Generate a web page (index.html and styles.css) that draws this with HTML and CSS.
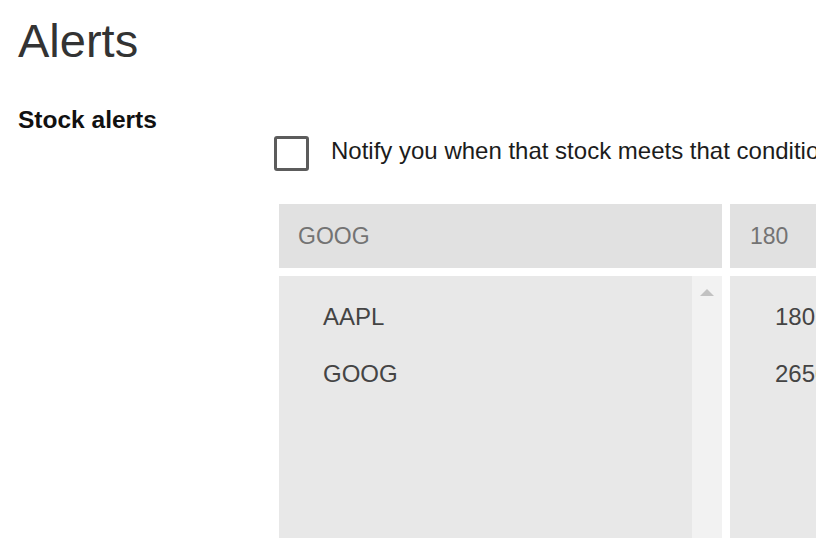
FILE: index.html
```html
<!DOCTYPE html>
<html lang="en">
<head>
<meta charset="utf-8">
<title>Alerts</title>
<link rel="stylesheet" href="styles.css">
</head>
<body>
<main class="page">
  <h1 class="title">Alerts</h1>
  <h2 class="section-title">Stock alerts</h2>
  <div class="section">
    <label class="check-row">
      <span class="checkbox"></span>
      <span class="check-label">Notify you when that stock meets that condition</span>
    </label>
    <div class="fields">
      <div class="field">GOOG</div>
      <div class="field field-right">180</div>
      <div class="list">
        <ul class="list-items">
          <li>AAPL</li>
          <li>GOOG</li>
        </ul>
        <div class="scrollbar"><span class="arrow-up"></span></div>
      </div>
      <div class="list list-right">
        <ul class="list-items">
          <li>180</li>
          <li>2650</li>
        </ul>
      </div>
    </div>
  </div>
</main>
</body>
</html>
```
FILE: styles.css
```css
html, body {
  margin: 0;
  padding: 0;
  width: 816px;
  height: 538px;
  overflow: hidden;
  background: #ffffff;
}

body {
  font-family: "Liberation Sans", Arial, sans-serif;
}

.page {
  padding: 13px 0 0 18px;
}

.title {
  margin: 0;
  font-size: 47px;
  line-height: 56px;
  font-weight: 400;
  color: #333333;
}

.section-title {
  margin: 37px 0 0 0;
  font-size: 24.5px;
  line-height: 28px;
  font-weight: 700;
  color: #111111;
}

.section {
  margin: 2px 0 0 256px;
}

.check-row {
  display: flex;
  align-items: flex-start;
  gap: 22px;
  white-space: nowrap;
}

.checkbox {
  flex: none;
  width: 29px;
  height: 29px;
  border: 3px solid #5c5c5c;
  border-radius: 3px;
  background: #ffffff;
}

.check-label {
  margin-top: 1px;
  font-size: 24px;
  line-height: 28px;
  color: #1c1c1c;
}

.fields {
  margin: 33px 0 0 5px;
  display: grid;
  grid-template-columns: 443px 300px;
  grid-template-rows: 64px 270px;
  gap: 8px;
}

.field {
  background: #e1e1e1;
  padding-left: 19px;
  font-size: 23px;
  line-height: 64px;
  color: #737373;
}

.field-right {
  padding-left: 20px;
}

.list {
  display: flex;
  background: #e8e8e8;
}

.list-items {
  flex: 1;
  list-style: none;
  margin: 0;
  padding: 12px 0 0 44px;
}

.list-items li {
  font-size: 24px;
  line-height: 57px;
  color: #444444;
}

.list-right .list-items {
  padding-left: 45px;
}

.scrollbar {
  flex: none;
  width: 30px;
  background: #f2f2f2;
  display: flex;
  justify-content: center;
  padding-top: 13px;
  box-sizing: border-box;
}

.arrow-up {
  width: 0;
  height: 0;
  border-left: 7px solid transparent;
  border-right: 7px solid transparent;
  border-bottom: 7px solid #c2c2c2;
}
```
